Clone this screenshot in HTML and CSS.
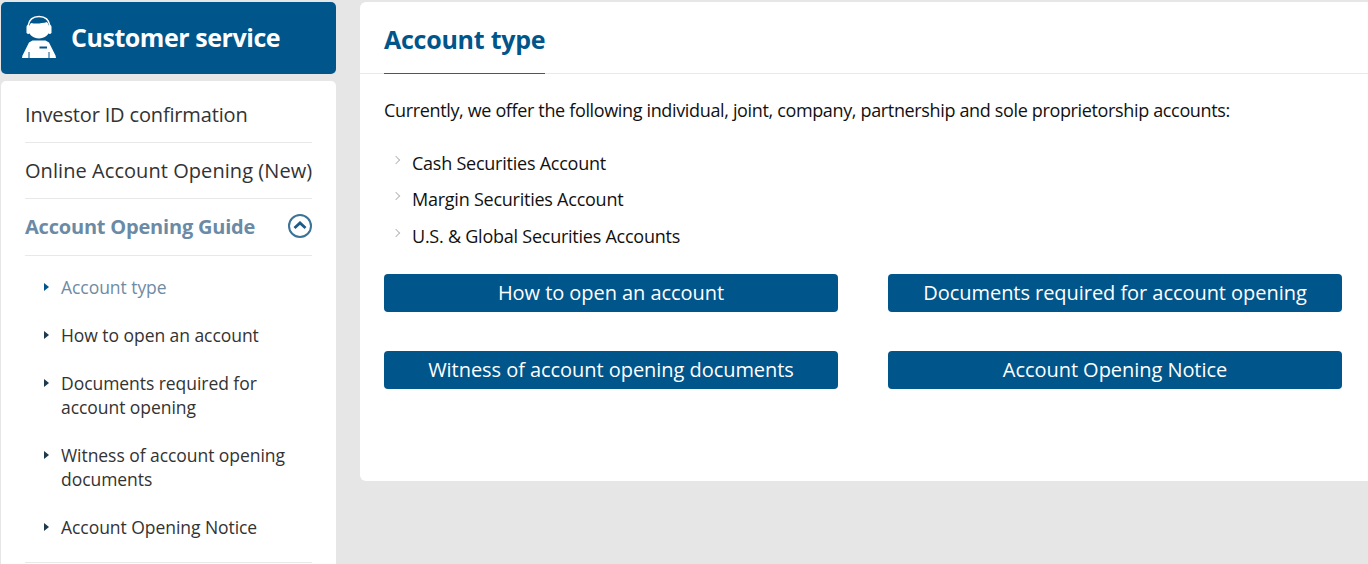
FILE: index.html
```html
<!DOCTYPE html>
<html lang="en">
<head>
<meta charset="utf-8">
<title>Account type</title>
<link rel="stylesheet" href="styles.css">
</head>
<body>
<div class="page">
  <aside class="side">
    <div class="side-head">
      <svg class="agent" viewBox="0 0 36 44" width="36" height="44">
        <path d="M7 11C8 4.500 12.500 1.500 18 1.500S28 4.500 29 11" fill="none" stroke="#fff" stroke-width="1.500"/>
        <rect x="5.500" y="10" width="3.500" height="9" rx="1.700" fill="#fff"/>
        <rect x="27" y="10" width="3.500" height="9" rx="1.700" fill="#fff"/>
        <path d="M10 8c5 1 11 .5 16-1 1.500 2 2.500 4.500 2.500 7.500 0 5.500-5 9-10.500 9S7.500 20 7.500 14.500C7.500 12 8.500 10 10 8z" fill="#fff"/>
        <path d="M11.500 25.500h13l3.500 2 6.500 13 .5 2.500H1l.5-2.500L8 27.500z" fill="#fff"/>
        <rect x="18.500" y="31.500" width="7.500" height="2" fill="#00558a"/>
        <path d="M8 37v6M28 37v6" stroke="#00558a" stroke-width="1"/>
      </svg>
      <span class="side-title">Customer service</span>
    </div>
    <nav class="side-card">
      <a class="nav-item nav-tight">Investor ID confirmation</a>
      <a class="nav-item">Online Account Opening (New)</a>
      <a class="nav-item nav-open">
        <span>Account Opening Guide</span>
        <svg class="chev" viewBox="0 0 24 24" width="24" height="24">
          <circle cx="12" cy="12" r="11" fill="none" stroke="#3a7396" stroke-width="2"/>
          <path d="M6.500 14l5.500-5 5.500 5" fill="none" stroke="#1d5c85" stroke-width="2.800"/>
        </svg>
      </a>
      <ul class="sub">
        <li class="sub-active">Account type</li>
        <li>How to open an account</li>
        <li>Documents required for account opening</li>
        <li>Witness of account opening documents</li>
        <li>Account Opening Notice</li>
      </ul>
    </nav>
  </aside>
  <main class="main">
    <div class="tab-row"><h1 class="tab">Account type</h1></div>
    <div class="body">
      <p class="intro">Currently, we offer the following individual, joint, company, partnership and sole proprietorship accounts:</p>
      <ul class="types">
        <li>Cash Securities Account</li>
        <li>Margin Securities Account</li>
        <li>U.S. &amp; Global Securities Accounts</li>
      </ul>
      <div class="btns">
        <a class="btn">How to open an account</a>
        <a class="btn">Documents required for account opening</a>
        <a class="btn">Witness of account opening documents</a>
        <a class="btn">Account Opening Notice</a>
      </div>
    </div>
  </main>
</div>
</body>
</html>
```
FILE: styles.css
```css
* { box-sizing: border-box; }
html, body { margin: 0; height: 564px; overflow: hidden; }
body { background: #e6e6e6; font-family: "Open Sans", "Noto Sans", sans-serif; color: #333; }
.page { display: flex; align-items: flex-start; gap: 24px; padding: 2px 0 0 1px; height: 564px; overflow: hidden; }

.side { width: 335px; flex: none; height: 562px; overflow: hidden; }
.side-head { height: 72px; background: #00558a; border-radius: 5px; display: flex; align-items: center; padding-left: 20px; gap: 14px; }
.agent { flex: none; margin-top: -2px; }
.side-title { color: #fff; font-size: 25px; line-height: 30px; font-weight: 700; letter-spacing: -0.45px; margin-top: -3px; }

.side-card { margin-top: 7px; background: #fff; border-radius: 5px 5px 0 0; padding: 6px 24px 0; height: 600px; }
.nav-item { display: flex; align-items: center; justify-content: space-between; height: 56px; border-bottom: 1px solid #e8e8e8; font-size: 20px; letter-spacing: 0.06px; color: #333; white-space: nowrap; padding-bottom: 1px; }
.nav-tight { letter-spacing: -0.16px; }
.nav-open { height: 57px; color: #6a8aa6; font-weight: 700; letter-spacing: -0.2px; padding-bottom: 2px; }
.chev { flex: none; }

.sub { list-style: none; margin: 0; padding: 19px 0 11px 36px; border-bottom: 1px solid #e8e8e8; }
.sub li { position: relative; font-size: 17.5px; line-height: 24px; letter-spacing: -0.05px; color: #333; margin-bottom: 24px; }
.sub li:last-child { margin-bottom: 12px; }
.sub li::before { content: ""; position: absolute; left: -17px; top: 8px; border-left: 5px solid #1f3a4d; border-top: 4px solid transparent; border-bottom: 4px solid transparent; }
.sub .sub-active { color: #6f8ba3; }
.sub .sub-active::before { border-left-color: #00558a; }

.main { flex: none; width: 1008px; height: 479px; background: #fff; border-radius: 6px 0 0 6px; }
.tab-row { height: 72px; padding-left: 24px; border-bottom: 1px solid #eaeaea; }
.tab { display: inline-block; height: 72px; margin: 0; padding-top: 18px; border-bottom: 1px solid #0f6d94; font-size: 25px; line-height: 38px; font-weight: 700; color: #00558a; letter-spacing: -0.25px; }
.body { padding-left: 24px; }
.intro { margin: 22px 0 0; font-size: 18px; line-height: 28px; color: #111; letter-spacing: -0.35px; }
.types { list-style: none; margin: 20.5px 0 0; padding: 0 0 0 28px; }
.types li { position: relative; font-size: 18px; line-height: 36.5px; color: #111; letter-spacing: -0.24px; }
.types li::before { content: ""; position: absolute; left: -19px; top: 12px; width: 5px; height: 5px; border-top: 1px solid #bbb; border-right: 1px solid #bbb; transform: rotate(45deg); }
.btns { display: grid; grid-template-columns: 454px 454px; column-gap: 50px; row-gap: 39px; margin-top: 19.5px; }
.btn { height: 38px; background: #00558a; color: #fff; border-radius: 4px; display: flex; align-items: center; justify-content: center; font-size: 20px; letter-spacing: -0.05px; padding-bottom: 1px; }
```
